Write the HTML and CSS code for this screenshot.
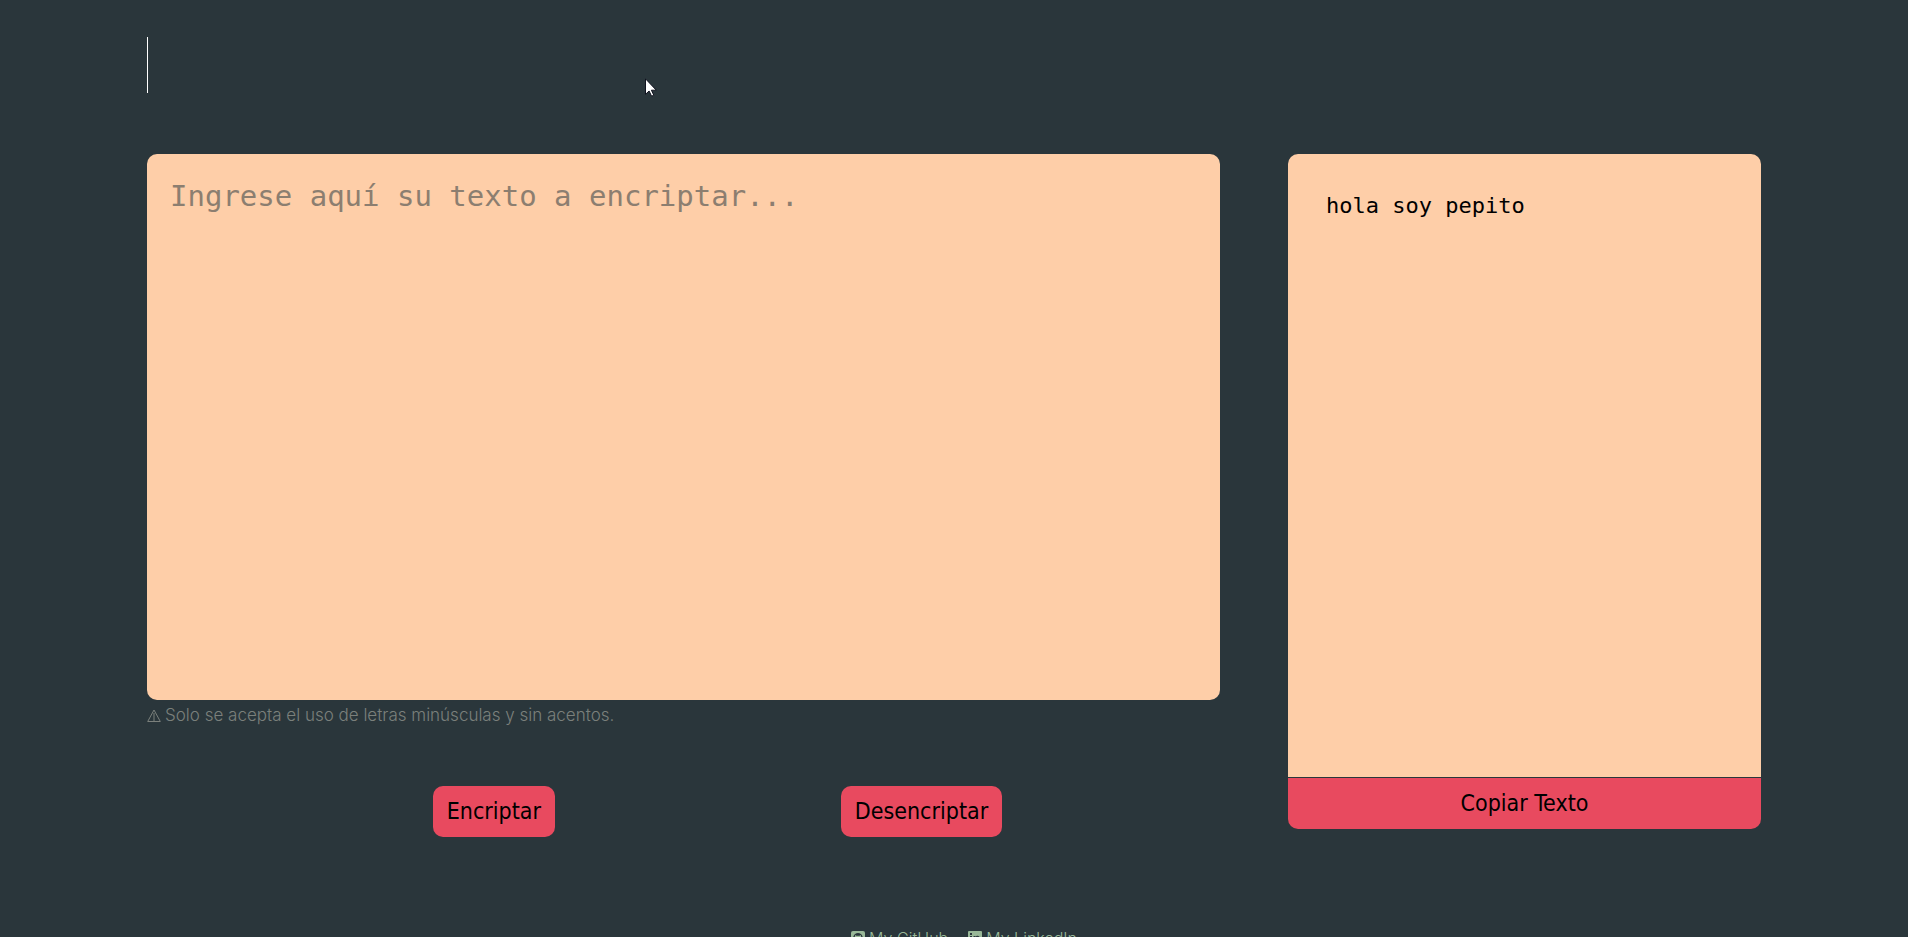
FILE: index.html
```html
<!DOCTYPE html>
<html lang="es">
<head>
<meta charset="utf-8">
<title>Encriptador de texto</title>
<link rel="stylesheet" href="styles.css">
</head>
<body>
<header class="header"><h1 class="title" aria-label="Encriptador"></h1></header>
<main class="main">
  <section class="editor">
    <textarea class="input" aria-label="Texto a encriptar" placeholder="Ingrese aquí su texto a encriptar..."></textarea>
    <p class="notice">
      <svg class="notice-icon" viewBox="0 0 14 13" aria-hidden="true"><path d="M7 1 13.300 12.500H.7Z M7 4v8.500" fill="none" stroke="currentColor"/></svg>
      Solo se acepta el uso de letras minúsculas y sin acentos.
    </p>
    <div class="actions">
      <button class="button" type="button">Encriptar</button>
      <button class="button" type="button">Desencriptar</button>
    </div>
  </section>
  <section class="result">
    <textarea class="output" aria-label="Resultado" readonly>hola soy pepito</textarea>
    <button class="button copy" type="button">Copiar Texto</button>
  </section>
</main>
<footer class="footer">
  <a class="link" href="#github"><svg class="link-icon" viewBox="0 0 14 14" aria-hidden="true"><path fill="currentColor" fill-rule="evenodd" d="M2 0h10a2 2 0 0 1 2 2v10a2 2 0 0 1-2 2H2a2 2 0 0 1-2-2V2a2 2 0 0 1 2-2ZM5.500 12v-2C2 9 3 6 4 5.500V4l1.500.7h3L10 4v1.500c1 .5 2 3.500-1.500 4.500v2H10.500c3-4 1-10-3.500-10S.5 8 3.500 12Z"/></svg>My GitHub</a>
  <a class="link" href="#linkedin"><svg class="link-icon" viewBox="0 0 14 14" aria-hidden="true"><path fill="currentColor" fill-rule="evenodd" d="M1 0h12a1 1 0 0 1 1 1v12a1 1 0 0 1-1 1H1a1 1 0 0 1-1-1V1a1 1 0 0 1 1-1ZM2 5v7h2V5ZM2 2v2h2V2ZM5.500 5v7h2V8c0-2 2.500-2 2.500 0v4h2V8c0-4-3.500-4-4.500-2V5Z"/></svg>My LinkedIn</a>
</footer>
<svg class="pointer" viewBox="0 0 12 19" aria-hidden="true"><path d="M.5.8v15.500l3.600-3.300 2.500 5.200 2.200-1-2.400-5h4.900Z" fill="#fff" stroke="#10131f"/></svg>
</body>
</html>
```
FILE: styles.css
```css
* { box-sizing: border-box; margin: 0; }
body {
  min-height: 100vh;
  background: #2a363b;
  font-family: Inter, sans-serif;
  overflow: hidden;
}
.header { padding: 37px 147px 61px; }
.title { width: 1px; height: 56px; background: #fff; }
.main {
  display: grid;
  grid-template-columns: 1141fr 473fr;
  padding: 0 147px;
}
.editor { display: flex; flex-direction: column; }
.input, .output {
  display: block;
  border: 0;
  outline: 0;
  resize: none;
  background: #fecea8;
  color: #000;
  font-family: "DejaVu Sans Mono", monospace;
}
.input {
  height: 546px;
  margin-right: 68px;
  padding: 24px 23px;
  border-radius: 10px;
  font-size: 29px;
  line-height: 36px;
}
.input::placeholder { color: #8c7e70; opacity: 1; }
.notice {
  display: flex;
  align-items: center;
  gap: 4px;
  padding-top: 3px;
  color: #7b807c;
  font-size: 17px;
  font-weight: 300;
  line-height: 24px;
}
.notice-icon { width: 14px; height: 13px; }
.actions {
  display: flex;
  justify-content: space-evenly;
  padding-top: 59px;
}
.button {
  padding: 11px 14px;
  border: 0;
  border-radius: 10px;
  background: #e84a5f;
  color: #000;
  font-family: "DejaVu Sans Condensed", "DejaVu Sans", sans-serif;
  font-size: 23px;
  line-height: 29px;
}
.result { display: flex; flex-direction: column; gap: 1px; }
.output {
  width: 100%;
  height: 623px;
  padding: 38px;
  border-radius: 10px 10px 0 0;
  font-size: 22px;
  line-height: 28px;
}
.copy { border-radius: 0 0 10px 10px; }
.footer {
  display: flex;
  justify-content: center;
  gap: 20px;
  padding: 89px 0 40px 20px;
}
.link {
  display: flex;
  align-items: center;
  gap: 4px;
  color: #99b898;
  font-size: 16px;
  font-weight: 300;
  line-height: 24px;
  text-decoration: none;
}
.link-icon { width: 14px; height: 14px; }
.pointer {
  position: absolute;
  top: 78px;
  left: 645px;
  width: 12px;
  height: 19px;
}
```
